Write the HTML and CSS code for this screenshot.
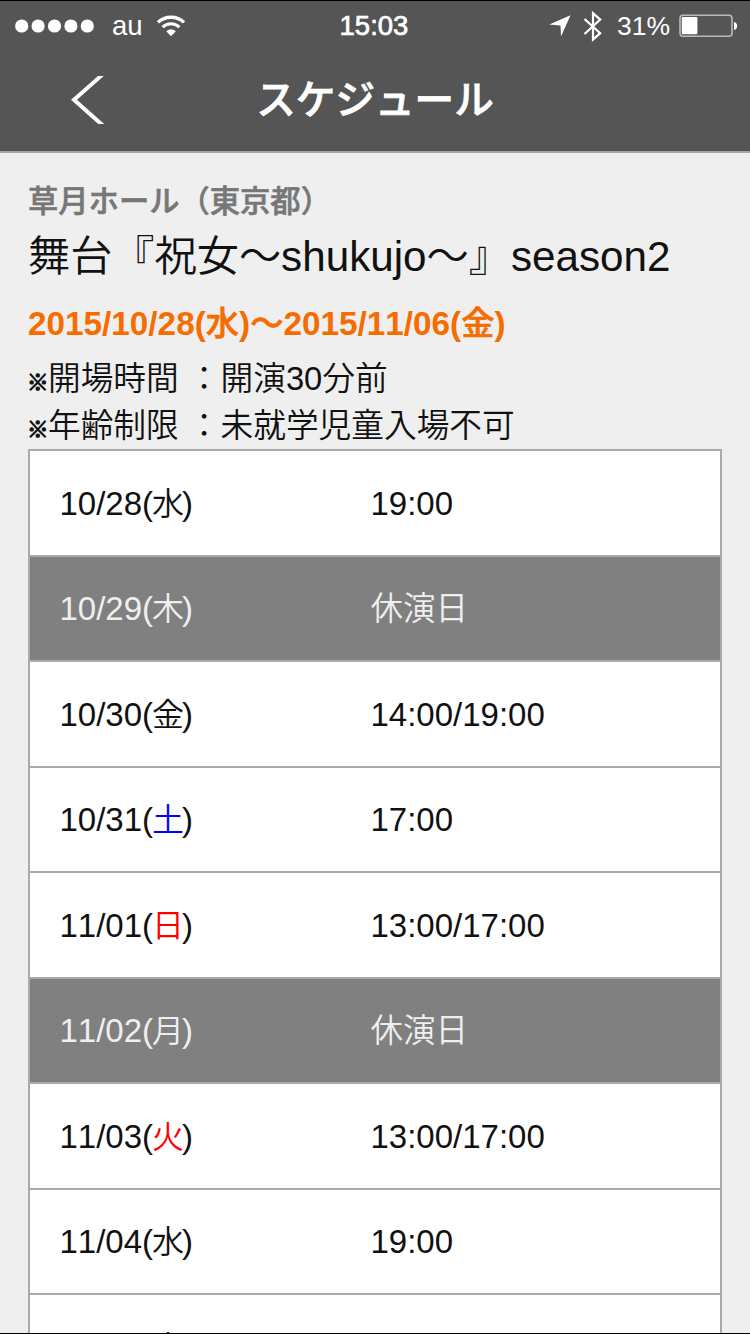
FILE: index.html
```html
<!DOCTYPE html>
<html lang="ja">
<head>
<meta charset="utf-8">
<title>スケジュール</title>
<link rel="stylesheet" href="styles.css">
</head>
<body>
<div class="screen">
  <header class="header">
    <div class="status">
      <div class="status-left">
        <svg class="dots" width="80" height="14" viewBox="0 0 80 14" fill="#fff"><circle cx="6.7" cy="7" r="6.6"/><circle cx="23.1" cy="7" r="6.6"/><circle cx="39.5" cy="7" r="6.6"/><circle cx="55.9" cy="7" r="6.6"/><circle cx="72.3" cy="7" r="6.6"/></svg>
        <span class="carrier">au</span>
        <svg class="wifi" width="30" height="22" viewBox="0 0 30 22"><path d="M2 7.4C9 .6 21 .6 28 7.4" fill="none" stroke="#fff" stroke-width="3.4"/><path d="M6.6 12.2C11.4 7.6 18.6 7.6 23.4 12.2" fill="none" stroke="#fff" stroke-width="3.2"/><path d="M10.2 16.2Q15 12.4 19.8 16.2L15 21.2Z" fill="#fff"/></svg>
      </div>
      <span class="clock">15:03</span>
      <div class="status-right">
        <svg class="location" width="22" height="22" viewBox="0 0 22 22" fill="#fff"><path d="M21.5.3L12 21.5L11.5 10.6L.3 9.6Z"/></svg>
        <svg class="bluetooth" width="20" height="33" viewBox="0 0 20 33" fill="none" stroke="#fff" stroke-width="2.2"><path d="M1.5 9L17.2 23.2L10 29.5V3.2L17.2 9.6L1.5 24"/></svg>
        <span class="percent">31%</span>
        <svg class="battery" width="60" height="24" viewBox="0 0 60 24"><rect x="1" y="1.2" width="52" height="21" rx="3" fill="none" stroke="#bbb" stroke-width="1.6"/><rect x="2.8" y="3" width="15.6" height="17.3" rx="1" fill="#fff"/><path d="M55 8Q58.2 8.8 58.2 12T55 16Z" fill="#fff"/></svg>
      </div>
    </div>
    <div class="nav">
      <svg class="back" width="36" height="50" viewBox="0 0 36 50"><path d="M28 1H33.8L7 24.7L34.2 49H28.2L1 24.7Z" fill="#fff"/></svg>
      <h1 class="nav-title">スケジュール</h1>
    </div>
  </header>
  <main class="content">
    <p class="venue">草月ホール（東京都）</p>
    <h2 class="show">舞台『祝女〜shukujo〜』season2</h2>
    <p class="period">2015/10/28(<span class="kanji">水</span>)<span class="kanji">〜</span>2015/11/06(<span class="kanji">金</span>)</p>
    <p class="note"><span class="mark">※</span>開場時間 ：開演30分前</p>
    <p class="note"><span class="mark">※</span>年齢制限 ：未就学児童入場不可</p>
    <ul class="schedule">
      <li class="row"><span class="day">10/28(<span class="week">水</span>)</span><span>19:00</span></li>
      <li class="row closed"><span class="day">10/29(<span class="week">木</span>)</span><span class="rest">休演日</span></li>
      <li class="row"><span class="day">10/30(<span class="week">金</span>)</span><span>14:00/19:00</span></li>
      <li class="row"><span class="day">10/31(<span class="week sat">土</span>)</span><span>17:00</span></li>
      <li class="row"><span class="day">11/01(<span class="week holiday">日</span>)</span><span>13:00/17:00</span></li>
      <li class="row closed"><span class="day">11/02(<span class="week">月</span>)</span><span class="rest">休演日</span></li>
      <li class="row"><span class="day">11/03(<span class="week holiday">火</span>)</span><span>13:00/17:00</span></li>
      <li class="row"><span class="day">11/04(<span class="week">水</span>)</span><span>19:00</span></li>
      <li class="row"><span class="day">11/05(<span class="week">木</span>)</span></li>
    </ul>
  </main>
</div>
</body>
</html>
```
FILE: styles.css
```css
* { box-sizing: border-box; margin: 0; padding: 0; }
body { background: #efefef; font-family: "Liberation Sans", "Noto Sans CJK JP", sans-serif; font-weight: 350; font-kerning: none; color: #111; }
.screen { height: 1334px; overflow: hidden; border-top: 1px solid #000; border-bottom: 1px solid #000; }
.header { height: 152px; background: #555; border-bottom: 2px solid #a5a5a5; color: #fff; }
.status { height: 50px; display: grid; grid-template-columns: 1fr auto 1fr; align-items: center; padding: 0 11px 0 15px; line-height: 32px; white-space: nowrap; }
.status-left, .status-right { display: flex; align-items: center; }
.status-right { justify-content: flex-end; }
.carrier { font-size: 27.5px; margin-left: 17px; }
.wifi { margin-left: 13px; }
.clock { font-size: 27.5px; margin-right: 6px; -webkit-text-stroke: 0.7px #fff; }
.bluetooth { margin-left: 12px; }
.percent { font-size: 26.5px; margin-left: 14px; }
.battery { margin-left: 9px; }
.nav { height: 98px; display: grid; grid-template-columns: 70px 1fr 70px; align-items: center; }
.back { margin-left: 70px; }
.nav-title { font-size: 39.6px; line-height: 60px; text-align: center; font-weight: 500; -webkit-text-stroke: 0.8px #fff; }
.content { padding: 25px 28px 0; white-space: nowrap; }
.venue { font-size: 30.3px; line-height: 48px; font-weight: 500; color: #777; -webkit-text-stroke: 0.6px #777; }
.show { font-size: 42.2px; line-height: 62px; font-weight: 350; }
.period { font-size: 33.3px; line-height: 48px; margin-top: 12px; font-weight: 700; color: #f66c00; }
.kanji { font-weight: 500; -webkit-text-stroke: 0.6px #f66c00; }
.note { font-size: 32.7px; height: 47px; line-height: 47px; }
.period + .note { margin-top: 7px; }
.mark { display: inline-block; width: 21px; margin-left: -1px; font-size: 21.5px; line-height: 1; -webkit-text-stroke: 1.1px #111; }
.schedule { list-style: none; border: 2px solid #aaa; background: #fff; }
.row { height: 105.5px; display: flex; align-items: center; padding: 2px 0 0 29.5px; font-size: 33px; line-height: 48px; border-bottom: 2px solid #aaa; }
.day { width: 311px; }
.week { font-size: 32px; margin-left: -1px; letter-spacing: -2px; }
.rest { font-size: 32.5px; }
.closed { background: #808080; color: #efefef; }
.sat { color: #00f; }
.holiday { color: #f00; }
```
